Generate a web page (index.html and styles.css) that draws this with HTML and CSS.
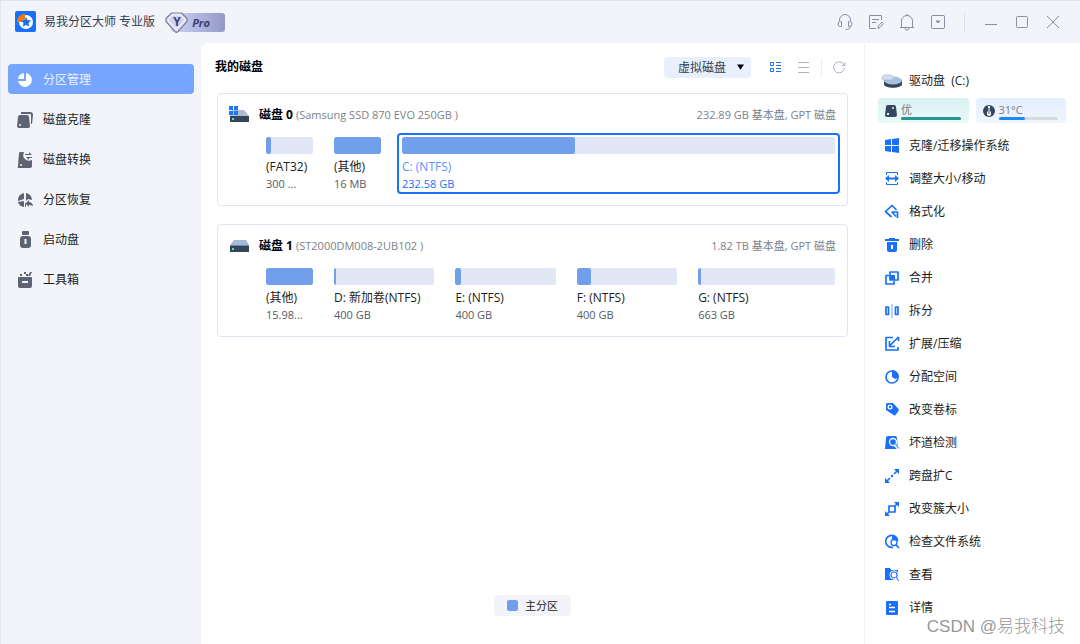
FILE: index.html
```html
<!DOCTYPE html>
<html lang="zh-CN">
<head>
<meta charset="utf-8">
<title>易我分区大师 专业版</title>
<link rel="stylesheet" href="styles.css">
</head>
<body>
<div class="app">
  <header class="titlebar">
    <svg class="logo" viewBox="0 0 22 22"><rect x="1" width="21" height="21" rx="2" fill="#1870fb"/><circle cx="12" cy="11" r="7" fill="#fff"/><path d="M3 11a8 8 0 0 1 8-8v5L8 11z" fill="#f5780c"/><path d="M12 6l1.500 3 3.500.6-2.500 2.400.6 3.500-3.100-1.600-3.100 1.600.6-3.500L7 9.600l3.500-.6z" fill="#1870fb"/></svg>
    <h1 class="app-name">易我分区大师 专业版</h1>
    <span class="pro"><svg class="pro-gem" viewBox="0 0 24 22"><path d="M6.500 1h10l5.500 5.500v3L13 19.500q-1.500 1.500-3 0L1 9.500v-3z" fill="#dde0f4" stroke="#807f9c" stroke-width="1.200" stroke-linejoin="round"/><path d="M7.500 3h8L20 8l-8.500 9L3 8z" fill="#ccd2ef" stroke="#f8f8ff"/></svg><b class="pro-y">Y</b><i class="pro-text">Pro</i></span>
    <div class="tools">
      <button aria-label="客服"><svg viewBox="0 0 18 18"><path d="M3.500 8V7a5.500 5.500 0 0 1 11 0v1M5.500 8.500v5h-1a2.500 2.500 0 0 1 0-5zM12.500 8.500v5h1a2.500 2.500 0 0 0 0-5zM14.500 13.500c0 2-2 3-5 3"/></svg></button>
      <button aria-label="反馈"><svg viewBox="0 0 18 18"><path d="M14.500 7V2.500h-12v13H9M5 6.500h7M5 9.500h4M11 15.500l.5-2.500 3.500-4 1.500 1.500-3.500 4z"/></svg></button>
      <button aria-label="通知"><svg viewBox="0 0 18 18"><path d="M2 14.500h14M3.500 14.500V8a5.500 5.500 0 0 1 11 0v6.500M7 15a2 2 0 0 0 4 0M9 2.500V1"/></svg></button>
      <button aria-label="菜单"><svg viewBox="0 0 18 18"><rect x="2.500" y="2.500" width="13" height="13" rx="1"/><path d="M7 8h4l-2 2z" fill="#8d8ca0"/></svg></button>
      <span class="tool-line"></span>
      <button aria-label="最小化"><svg viewBox="0 0 18 18"><path d="M3 11.500h12"/></svg></button>
      <button aria-label="最大化"><svg viewBox="0 0 18 18"><rect x="3.500" y="3.500" width="11" height="11" rx="1"/></svg></button>
      <button aria-label="关闭"><svg viewBox="0 0 18 18"><path d="M3 3l12 12M15 3L3 15"/></svg></button>
    </div>
  </header>
  <div class="body">
    <nav class="sidebar">
      <button class="nav active"><svg viewBox="0 0 18 18"><path d="M10 2a7 7 0 1 1-8 8h8z"/><path d="M8 2v6H2a7 7 0 0 1 6-6z"/></svg>分区管理</button>
      <button class="nav"><svg viewBox="0 0 18 18"><path d="M5 1h9q3 0 3 3l-1 9h-1V4q0-1-1-1H5z"/><path fill-rule="evenodd" d="M4 4h7q2 0 2 2l1 9q0 2-2 2H3q-2 0-2-2l1-9q0-2 2-2zm-1 10a1 1 0 1 0 2 0 1 1 0 0 0-2 0z"/></svg>磁盘克隆</button>
      <button class="nav"><svg viewBox="0 0 18 18"><path fill-rule="evenodd" d="M4 1h4q-2 5 1 7 3 3 7 1v6q0 2-2 2H3q-2 0-1-2L3 2zM4 14a1 1 0 1 0 2 0 1 1 0 0 0-2 0z"/><path d="M9 3h4V1l3 3H9zM10 6h6v1h-3v2l-3-3z"/></svg>磁盘转换</button>
      <button class="nav"><svg viewBox="0 0 18 18"><path d="M8 2v6l-6 2a7 7 0 0 1 6-8zM10 2a7 7 0 0 1 6 7l-4-1-2 2zM2 11l6-1v6a7 7 0 0 1-6-5zM10 12l3-3v2c2 0 4 2 4 4-2-1-3-1-4-1v2l-3-3v3H9v-4z"/></svg>分区恢复</button>
      <button class="nav"><svg viewBox="0 0 18 18"><rect x="6" width="7" height="4" rx="1"/><path fill-rule="evenodd" d="M7 5h5q3 0 3 3v6q0 3-3 3H7q-3 0-3-3V8q0-3 3-3zM8.500 8v5h2V8z"/></svg>启动盘</button>
      <button class="nav"><svg viewBox="0 0 18 18"><path fill-rule="evenodd" d="M3 6h12q1 0 1 1v8q0 2-2 2H4q-2 0-2-2V7q0-1 1-1zm3 4v2h6v-2z"/><path d="M4 3h2v2H4zM8 1h2v2H8zM10 3h2v2h-2zM14 1h2l-2 4h-2z"/></svg>工具箱</button>
    </nav>
    <main class="main">
      <div class="main-head">
        <h2>我的磁盘</h2>
        <div class="drop"><select class="drop-select" aria-label="虚拟磁盘"><option>虚拟磁盘</option></select><svg class="drop-arrow" viewBox="0 0 8 6"><path d="M0 0h8L4 6z"/></svg></div>
        <button class="view blue" aria-label="图形视图"><svg viewBox="0 0 14 14"><path d="M2.500 2.500h3v3h-3zM2.500 8.500h3v3h-3zM8 2.500h5M8 5.500h5M8 8.500h5M8 11.500h5"/></svg></button>
        <button class="view list" aria-label="列表视图"><svg viewBox="0 0 14 14"><path d="M2 2.500h11M2 7.500h11M2 12.500h11"/></svg></button>
        <span class="view-line"></span>
        <button class="view refresh" aria-label="刷新"><svg viewBox="0 0 14 14"><path d="M12 5a5.500 5.500 0 1 0 .5 3M13 2v3.500H9.500"/></svg></button>
      </div>
      <section class="disk">
        <div class="disk-head">
          <svg class="disk-icon" viewBox="0 0 22 18"><path d="M4 4h12l5 6H2z" fill="#aebcd1"/><path d="M2 10h19v6H2z" fill="#35465b"/><path d="M4 12h2v2H4z" fill="#5fe29a"/><path d="M1 0h4v4H1zM6 0h4v4H6zM1 5h4v4H1zM6 5h4v4H6z" fill="#1d77fa"/></svg>
          <h3>磁盘 0</h3><span class="model">(Samsung SSD 870 EVO 250GB )</span><span class="total">232.89 GB 基本盘, GPT 磁盘</span>
        </div>
        <div class="parts">
          <div class="part small"><div class="bar"><div class="used" style="width:10%"></div></div><span class="name">(FAT32)</span><span class="size">300 ...</span></div>
          <div class="part small"><div class="bar"><div class="used" style="width:100%"></div></div><span class="name">(其他)</span><span class="size">16 MB</span></div>
          <div class="part selected"><div class="bar"><div class="used" style="width:40%"></div></div><span class="name">C: (NTFS)</span><span class="size">232.58 GB</span></div>
        </div>
      </section>
      <section class="disk">
        <div class="disk-head">
          <svg class="disk-icon" viewBox="0 0 22 18"><path d="M6 3h12l3 5v2H2V8z" fill="#a6b9d5"/><path d="M2 8h19v7H2z" fill="#35465b"/><path d="M2 8h19v1H2z" fill="#7488a4"/><path d="M4 11h2v2H4z" fill="#5fe29a"/></svg>
          <h3>磁盘 1</h3><span class="model">(ST2000DM008-2UB102 )</span><span class="total">1.82 TB 基本盘, GPT 磁盘</span>
        </div>
        <div class="parts">
          <div class="part small"><div class="bar"><div class="used" style="width:100%"></div></div><span class="name">(其他)</span><span class="size">15.98...</span></div>
          <div class="part"><div class="bar"><div class="used" style="width:2%"></div></div><span class="name">D: 新加卷(NTFS)</span><span class="size">400 GB</span></div>
          <div class="part"><div class="bar"><div class="used" style="width:6%"></div></div><span class="name">E: (NTFS)</span><span class="size">400 GB</span></div>
          <div class="part"><div class="bar"><div class="used" style="width:14%"></div></div><span class="name">F: (NTFS)</span><span class="size">400 GB</span></div>
          <div class="part large"><div class="bar"><div class="used" style="width:2%"></div></div><span class="name">G: (NTFS)</span><span class="size">663 GB</span></div>
        </div>
      </section>
      <div class="legend"><span class="swatch"></span>主分区</div>
    </main>
    <aside class="panel">
      <h2 class="drive"><svg viewBox="0 0 22 16"><path d="M3 7v4c0 5 18 5 18 0V7z" fill="#35475e"/><ellipse cx="12" cy="7.500" rx="9" ry="4" fill="#a9bfdc"/><path d="M1 4l2-2h7l3 2-2 3H3L1 6z" fill="#cfdef0" stroke="#a5b6cb" stroke-width=".6"/></svg>驱动盘&nbsp; (C:)</h2>
      <div class="stats">
        <div class="stat health"><svg viewBox="0 0 14 14"><path fill-rule="evenodd" d="M4 1h6q2 0 2 2l1 8q0 2-2 2H3q-2 0-2-2l1-8q0-2 2-2zM3 9v2h2V9zm5-5a1 1 0 1 0 2 0 1 1 0 0 0-2 0z"/></svg><div class="meter"><span>优</span><div class="track"><div class="fill" style="width:100%"></div></div></div></div>
        <div class="stat temp"><svg viewBox="0 0 14 14"><circle cx="7" cy="7" r="6"/><path d="M6 2h2v5l1 1v3l-2 1-2-1V8l1-1z" fill="#fff"/><path d="M7 4v6" stroke="#35475e"/></svg><div class="meter"><span>31°C</span><div class="track"><div class="fill" style="width:44%"></div></div></div></div>
      </div>
      <div class="actions">
        <button><svg viewBox="0 0 16 16"><path d="M1 2l6-1v6H1zM8 1l7-1v7H8zM1 8h6v6l-6-1zM8 8h7v7l-7-1z"/></svg>克隆/迁移操作系统</button>
        <button><svg viewBox="0 0 16 16"><path d="M2.500 4V1.500h11V4M2.500 11v2.500h11V11" class="line"/><path d="M1 7.500L5 4v2.500h6V4l4 3.500L11 11V8.500H5V11z"/></svg>调整大小/移动</button>
        <button><svg viewBox="0 0 16 16"><path d="M12.500 6L8 1.500 1.500 7.500l6 5.500M13.500 14V8H8l4 4.500" class="line thick"/></svg>格式化</button>
        <button><svg viewBox="0 0 16 16"><path d="M5 1h6v1h4v2H1V2h4z"/><path fill-rule="evenodd" d="M3 5h10v8q0 2-2 2H5q-2 0-2-2zm4 3v4h2V8z"/></svg>删除</button>
        <button><svg viewBox="0 0 16 16"><path d="M6 2h8v8H6zM5 5.500H2V14h8v-3" class="line thick"/><path d="M6 5h5v5H6z"/></svg>合并</button>
        <button><svg viewBox="0 0 16 16"><path d="M2 4h2.500v7.500H2zM11.500 4H14v7.500h-2.500z" class="line thick"/><path d="M8 1v14" class="line faint"/></svg>拆分</button>
        <button><svg viewBox="0 0 16 16"><path d="M9 1.500H2v12.500h12V11M13.500 2L6 9.500M5.500 5v5.500H11M13 1.500h1.500V5" class="line thick"/></svg>扩展/压缩</button>
        <button><svg viewBox="0 0 16 16"><circle cx="8" cy="8" r="6" class="line thick"/><path d="M8 1a7 7 0 0 1 7 7l-4 2-3-2z"/></svg>分配空间</button>
        <button><svg viewBox="0 0 16 16"><path fill-rule="evenodd" d="M3 1h6l5.500 6q.5 1 0 2l-3 4q-1 1-2 0L2 8V2zM3.500 5a2.500 2.500 0 1 0 5 0 2.500 2.500 0 0 0-5 0z"/><circle cx="6" cy="5" r="1.200"/></svg>改变卷标</button>
        <button><svg viewBox="0 0 16 16"><path d="M4 1h7q2 0 2 2l1 11H1L2 3q0-2 2-2z"/><circle cx="9" cy="7" r="3.500" fill="#1870fb" stroke="#fff" stroke-width="1.300"/><path d="M11 10l4 4" stroke="#fff" stroke-width="3"/><path d="M11.500 9.500l3.500 4" class="line"/></svg>坏道检测</button>
        <button><svg viewBox="0 0 16 16"><path d="M10 1h5v5zM1 10v5h5z"/><path d="M10 6l3-3M6 10l-3 3" class="line thick"/><circle cx="8" cy="8" r="1.200"/></svg>跨盘扩C</button>
        <button><svg viewBox="0 0 16 16"><path d="M10 1h5v5zM1 10v5h5z"/><path d="M5 5h6v6H5zM11 5l3-3M2 14l3-3" class="line thick"/></svg>改变簇大小</button>
        <button><svg viewBox="0 0 16 16"><path d="M13.500 6A6 6 0 1 0 9 13.300" class="line thick"/><path d="M8 1a7 7 0 0 1 6.500 6L8 7z"/><circle cx="10" cy="8.500" r="3" fill="#fff" stroke="#1870fb" stroke-width="1.300"/><path d="M12 11l3 3" class="line thick"/></svg>检查文件系统</button>
        <button><svg viewBox="0 0 16 16"><path d="M1 1h5l1 2h7v10H1z"/><circle cx="10" cy="8" r="4.500" fill="#fff"/><circle cx="10" cy="8" r="3" fill="#fff" stroke="#1870fb" stroke-width="1.200"/><path d="M11 11l3 4" stroke="#fff" stroke-width="3"/><path d="M12 10.500l3 3.500" class="line"/></svg>查看</button>
        <button><svg viewBox="0 0 16 16"><rect x="2" y="1" width="12" height="14" rx="1"/><path d="M5 4.500h2M5 7.500h6M5 11.500h6" stroke="#fff" stroke-width="1.500"/></svg>详情</button>
      </div>
    </aside>
  </div>
  <div class="credit">CSDN @易我科技</div>
</div>
</body>
</html>
```
FILE: styles.css
```css
* { box-sizing: border-box; }
body {
  margin: 0;
  background: #f2f4f9;
  color: #1c1d20;
  font: 12px/18px "Open Sans", "Noto Sans CJK SC", sans-serif;
}
h1, h2, h3 { margin: 0; font-size: 12px; }
button { border: 0; padding: 0; background: none; color: inherit; font: inherit; }
svg { flex: none; display: block; }
.app {
  position: relative;
  display: flex;
  flex-direction: column;
  min-height: 100vh;
  border-top: 1px solid #dfe6f2;
  border-left: 1px solid #e1e7f2;
}
.titlebar { display: flex; align-items: center; height: 42px; padding: 0 18px 0 13px; }
.logo { width: 22px; height: 22px; }
.app-name { margin-left: 8px; color: #343b4c; font-weight: 400; }
.pro {
  position: relative;
  display: flex;
  width: 54px;
  height: 19px;
  margin-left: 16px;
  padding-left: 21px;
  border-radius: 3px;
  background: linear-gradient(90deg, #ccd6f8, #9498c6);
}
.pro-gem { position: absolute; left: -6px; top: -1px; width: 24px; height: 22px; }
.pro-y { position: absolute; left: 2px; top: 0; color: #3b3e73; line-height: 18px; }
.pro-text { color: #393c74; font-size: 11px; font-weight: 700; line-height: 19px; }
.tools { display: flex; align-items: center; gap: 13px; margin-left: auto; color: #8d8ca0; }
.tools svg { width: 18px; height: 18px; fill: none; stroke: currentColor; stroke-linejoin: round; }
.tool-line { width: 1px; height: 21px; margin: 0 4px; background: #dae3f2; }
.body { flex: 1; display: flex; }
.sidebar { display: flex; flex-direction: column; gap: 10px; width: 200px; padding: 21px 7px; }
.nav { display: flex; align-items: center; gap: 9px; height: 30px; padding: 2px 0 0 8px; border-radius: 4px; }
.nav svg { width: 18px; height: 18px; fill: #5c6372; }
.active { background: #76a5fd; color: #e9f1ff; }
.active svg { fill: #fff; }
.main {
  flex: 1;
  display: flex;
  flex-direction: column;
  gap: 18px;
  min-width: 0;
  padding: 14px 16px 28px;
  border-radius: 8px 0 0 0;
  background: #fff;
}
.main-head { display: flex; align-items: center; height: 20px; margin: 0 0 -2px -2px; }
.main-head h2 { color: #000; }
.drop { position: relative; height: 21px; margin-left: auto; margin-right: 17px; }
.drop-select {
  width: 87px;
  height: 21px;
  padding: 2px 14px 0;
  border: 0;
  border-radius: 4px;
  appearance: none;
  background: #e8f0fd;
  color: #343b4c;
  font: inherit;
}
.drop-arrow { position: absolute; top: 7px; right: 7px; width: 7px; height: 6px; pointer-events: none; }
.view { margin-right: 14px; color: #aeb3c1; }
.view svg { width: 14px; height: 14px; fill: none; stroke: currentColor; }
.blue { color: #1870fb; }
.list { margin-right: 11px; }
.view-line { width: 1px; height: 17px; margin-right: 10px; background: #eceef3; }
.refresh { margin-right: 2px; }
.disk { padding: 10px 7px 11px 10px; border: 1px solid #dfe5f1; border-radius: 4px; }
.disk-head { display: flex; align-items: center; height: 22px; margin-bottom: 7px; padding-right: 4px; }
.disk-icon { width: 22px; height: 18px; }
.disk-head h3 { margin: 0 3px 0 9px; color: #000; }
.model, .total { color: #7d818a; font-size: 11px; }
.total { margin-left: auto; }
.parts { display: flex; gap: 11px; margin-left: 33px; }
.part {
  flex: 11 1 0;
  display: flex;
  flex-direction: column;
  min-width: 0;
  padding: 2px 3px 0;
  border: 2px solid transparent;
  border-radius: 4px;
  white-space: nowrap;
}
.small { flex: none; width: 57px; }
.large { flex-grow: 15; }
.bar { height: 17px; margin-bottom: 4px; border-radius: 2px; background: #e1e7f4; overflow: hidden; }
.used { height: 100%; border-radius: 2px; background: #729feb; }
.size { color: #555a63; font-size: 11px; line-height: 16px; }
.selected { border-color: #1870fb; }
.selected .name { color: #5b95fb; }
.selected .size { color: #1870fb; }
.legend {
  display: flex;
  align-items: center;
  align-self: center;
  gap: 7px;
  height: 21px;
  margin-top: auto;
  padding: 0 13px;
  border-radius: 4px;
  background: #f2f4f9;
  font-size: 11px;
}
.swatch { width: 11px; height: 11px; border-radius: 2px; background: #729feb; }
.panel { width: 216px; padding: 27px 14px 0 13px; border-left: 1px solid #f1f2f5; background: #fff; }
.drive { display: flex; align-items: center; gap: 6px; height: 20px; padding: 1px 0 0 3px; font-weight: 400; }
.drive svg { width: 22px; height: 16px; }
.stats { display: flex; gap: 7px; margin: 8px 0 6px; }
.stat { flex: 1; display: flex; align-items: center; gap: 3px; height: 25px; padding: 0 8px 0 6px; border-radius: 4px; }
.stat svg { width: 14px; height: 14px; fill: #35475e; }
.meter { flex: 1; color: #777c85; font-size: 11px; line-height: 15px; }
.track { height: 3px; border-radius: 2px; background: #d8d9dd; }
.fill { height: 100%; border-radius: 2px; }
.health { background: linear-gradient(#daf1f2, #e9f9f8); }
.health .fill { background: #2a9492; }
.temp { background: linear-gradient(#e3eefd, #f0f6ff); }
.temp .fill { background: #2384ff; }
.actions { display: flex; flex-direction: column; }
.actions button { display: flex; align-items: center; gap: 9px; height: 33px; padding: 1px 0 0 6px; }
.actions svg { width: 16px; height: 16px; fill: #1870fb; }
.actions .line { fill: none; stroke: #1870fb; stroke-width: 1; stroke-linejoin: round; }
.actions .thick { stroke-width: 1.7; }
.actions .faint { opacity: 0.6; }
.credit {
  position: absolute;
  right: 15px;
  bottom: 5px;
  color: #96989c;
  font: 300 17px/24px "Liberation Sans", "Noto Sans CJK SC", sans-serif;
}
```
